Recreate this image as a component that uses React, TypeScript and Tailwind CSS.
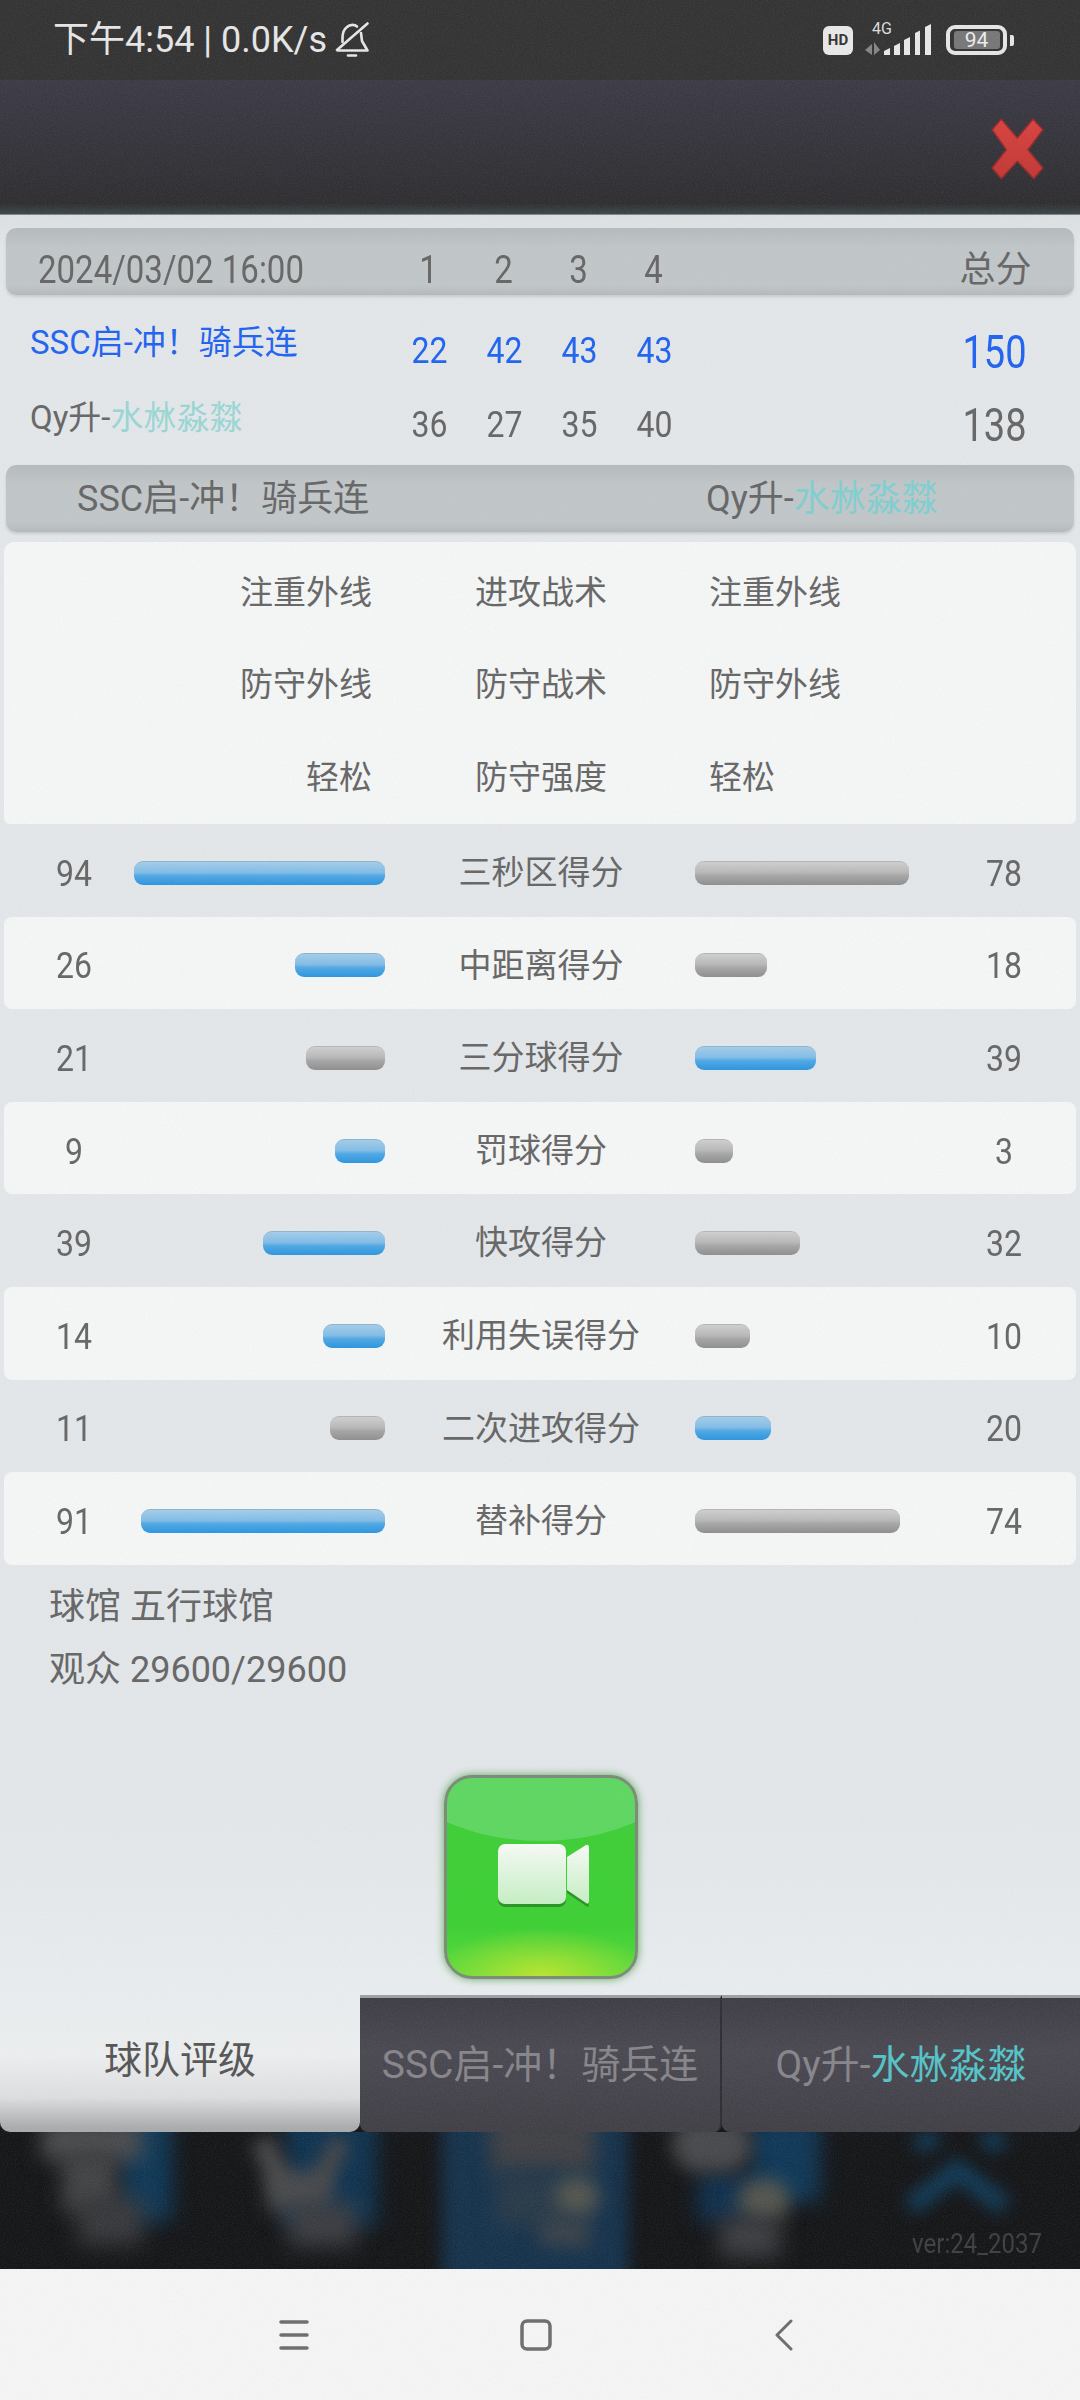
const quarters = ['1', '2', '3', '4']
const teamA = ['22', '42', '43', '43']
const teamB = ['36', '27', '35', '40']

const tactics = [
  ['注重外线', '进攻战术', '注重外线'],
  ['防守外线', '防守战术', '防守外线'],
  ['轻松', '防守强度', '轻松'],
]

const stats = [
  { a: 94, b: 78, label: '三秒区得分', wa: 251, wb: 214, win: 'a' },
  { a: 26, b: 18, label: '中距离得分', wa: 90, wb: 72, win: 'a' },
  { a: 21, b: 39, label: '三分球得分', wa: 79, wb: 121, win: 'b' },
  { a: 9, b: 3, label: '罚球得分', wa: 50, wb: 38, win: 'a' },
  { a: 39, b: 32, label: '快攻得分', wa: 122, wb: 105, win: 'a' },
  { a: 14, b: 10, label: '利用失误得分', wa: 62, wb: 55, win: 'a' },
  { a: 11, b: 20, label: '二次进攻得分', wa: 55, wb: 76, win: 'b' },
  { a: 91, b: 74, label: '替补得分', wa: 244, wb: 205, win: 'a' },
]

function Bar({ width, blue }: { width: number; blue: boolean }) {
  return (
    <div
      className={
        blue
          ? 'h-[24px] rounded-[9px] border-t border-[#8db4cc] bg-[linear-gradient(#a3cde9,#82bde8_45%,#4fa8e4_60%,#2b95df)]'
          : 'h-[24px] rounded-[9px] border-t border-[#b5b5b5] bg-[linear-gradient(#cfcfcf,#b8b8b8_45%,#a6a6a6_60%,#8e8e8e)]'
      }
      style={{ width }}
    />
  )
}

function BellOff() {
  return (
    <svg width="34" height="37" viewBox="0 0 34 37" fill="none" stroke="#e6e6e6" strokeWidth="2.6" strokeLinecap="round" strokeLinejoin="round">
      <path d="M22 4.5C20 2.5 15 2 12 5C8 8 7.5 12 7.5 16L7.5 20" />
      <path d="M26 11C26.5 14 26.5 16 27 19L32.5 28.5L3 28.5" />
      <path d="M32.5 1.5L2 28" />
      <path d="M13 33.5H21" />
    </svg>
  )
}

function StatusIcons() {
  return (
    <div className="flex items-center">
      <div className="flex h-[29px] w-[30px] items-center justify-center rounded-[6px] bg-[#e8e8e8] text-[15px] leading-none font-bold text-[#333]">HD</div>
      <div className="relative ml-[12px] h-[32px] w-[67px]">
        <div className="absolute top-[-3px] left-[7px] text-[16px] leading-[16px] text-[#ddd]">4G</div>
        <svg className="absolute top-0 left-0" width="67" height="32" viewBox="0 0 67 32">
          <path d="M7 20L0 26L7 31ZM9 18V31L15 26Z" fill="#858585" />
          <path d="M19 27L25 24V31H19ZM29 22L35 19V31H29ZM39 16L45 13V31H39ZM50 9L55 6.500V31H50ZM60 3L66 0V31H60Z" fill="#e8e8e8" />
        </svg>
      </div>
      <div className="ml-[14px] flex h-[30px] w-[61px] items-center justify-center rounded-[9px] border-[4px] border-[#e6e6e6]">
        <div className="flex h-[18px] w-[46px] items-center justify-center rounded-[3px] bg-[#777] text-[21px] leading-none text-[#ececec]">94</div>
      </div>
      <div className="ml-[3px] h-[11px] w-[4px] rounded-r-[2px] bg-[#e6e6e6]" />
    </div>
  )
}

function CloseIcon() {
  return (
    <svg width="53" height="62" viewBox="-1 -1 53 62">
      <defs>
        <linearGradient id="closeFill" x1="0" y1="0" x2="0" y2="1">
          <stop offset="0" stopColor="#d9423f" />
          <stop offset="1" stopColor="#c13734" />
        </linearGradient>
      </defs>
      <polygon
        points="9.3,0 25.3,19 41,0 51,10.700 36,30.700 51,49 41.700,59.700 25.300,42.300 9.300,59.700 0,49 14.300,30.700 0,10.700"
        fill="url(#closeFill)"
        stroke="#8d2b2a"
        strokeWidth="1.500"
        strokeLinejoin="round"
      />
    </svg>
  )
}

function CameraIcon() {
  return (
    <svg className="ml-[5px]" width="92" height="66" viewBox="0 0 92 66">
      <defs>
        <linearGradient id="camFill" x1="0" y1="0" x2="0" y2="1">
          <stop offset="0" stopColor="#f7fbf6" />
          <stop offset="1" stopColor="#c6efc4" />
        </linearGradient>
      </defs>
      <g fill="#23801f" opacity="0.75" transform="translate(0 3)">
        <rect x="0" y="0" width="68" height="60" rx="7" />
        <path d="M69 15L88 1Q91 0 91 4V57Q91 61 88 59L69 46Z" />
      </g>
      <g fill="url(#camFill)">
        <rect x="0" y="0" width="68" height="60" rx="7" />
        <path d="M69 13L88 1Q91 0 91 4V57Q91 61 88 59L69 46Z" />
      </g>
    </svg>
  )
}

function BlurredIcons() {
  return (
    <>
      <div className="absolute top-[-20px] left-[120px] h-[110px] w-[52px] bg-[#0f3857] blur-[10px]" />
      <div className="absolute top-[-10px] left-[42px] h-[38px] w-[100px] bg-[#4c4d50] blur-[10px]" />
      <div className="absolute top-[20px] left-[62px] h-[60px] w-[55px] bg-[#434446] blur-[10px]" />
      <div className="absolute top-[65px] left-[78px] h-[48px] w-[65px] bg-[#38393c] blur-[11px]" />

      <div className="absolute top-[-20px] left-[285px] h-[115px] w-[92px] bg-[#0f3350] blur-[10px]" />
      <div className="absolute top-[5px] left-[262px] h-[60px] w-[24px] rotate-[-25deg] bg-[#454648] blur-[8px]" />
      <div className="absolute top-[5px] left-[318px] h-[60px] w-[20px] rotate-[25deg] bg-[#454648] blur-[8px]" />
      <div className="absolute top-[40px] left-[268px] h-[40px] w-[60px] bg-[#4a4b4d] blur-[10px]" />
      <div className="absolute top-[70px] left-[288px] h-[44px] w-[68px] bg-[#3c3d41] blur-[11px]" />

      <div className="absolute top-[-20px] left-[442px] h-[180px] w-[186px] bg-[#15324c] blur-[8px]" />
      <div className="absolute top-[-20px] left-[490px] h-[60px] w-[105px] bg-[#404145] blur-[10px]" />
      <div className="absolute top-[40px] left-[495px] h-[55px] w-[70px] bg-[#283a49] blur-[10px]" />
      <div className="absolute top-[45px] left-[555px] h-[40px] w-[44px] rounded-full bg-[#55564f] blur-[9px]" />
      <div className="absolute top-[85px] left-[540px] h-[30px] w-[50px] bg-[#39424a] blur-[9px]" />

      <div className="absolute top-[-15px] left-[750px] h-[85px] w-[70px] bg-[#0f3857] blur-[10px]" />
      <div className="absolute top-[40px] left-[698px] h-[50px] w-[55px] bg-[#10304d] blur-[10px]" />
      <div className="absolute top-[-15px] left-[672px] h-[55px] w-[80px] rounded-full bg-[#48494c] blur-[9px]" />
      <div className="absolute top-[47px] left-[738px] h-[42px] w-[52px] rounded-full bg-[#55564f] blur-[9px]" />
      <div className="absolute top-[85px] left-[720px] h-[40px] w-[60px] bg-[#3e3f43] blur-[11px]" />

      <svg className="absolute top-0 left-[895px] blur-[8px]" width="130" height="90" viewBox="0 0 130 90" fill="none" stroke="#113a56" strokeWidth="20">
        <path d="M15 75L62 38L110 75" />
        <path d="M22 15L42 0M88 0L108 15" />
      </svg>
    </>
  )
}

export default function App() {
  return (
    <div className="relative flex h-[2400px] w-[1080px] flex-col overflow-hidden bg-[#141517] font-['Roboto','Noto_Sans_CJK_SC',sans-serif] text-[33px] text-[#666]">
      {/* status bar */}
      <div className="flex h-[80px] items-center justify-between bg-[#333333] pr-[66px] pl-[53px] text-[#e6e6e6]">
        <div className="flex items-center gap-[8px]">
          <span className="text-[36px] leading-none">下午4:54 | 0.0K/s</span>
          <BellOff />
        </div>
        <StatusIcons />
      </div>

      <div className="flex h-[134px] items-start justify-end bg-[linear-gradient(#3c3a46,#2e2e31_92%,#3d4648)] pt-[38px] pr-[36px]">
        <CloseIcon />
      </div>

      {/* main panel */}
      <div className="flex h-[1781px] flex-col border-t border-[#7d8688] bg-[linear-gradient(#dde0e1,#e3e7ea_2%,#e3e7ea_90%,#e9edef)] pt-[13px]">
        <div className="mx-[6px] flex h-[67px] items-center rounded-[10px] bg-[linear-gradient(#b5babd,#c1c6c9_30%,#c1c6c9_85%,#b4b9bc)] pt-[16px] pl-[32px] shadow-[0_2px_3px_rgba(0,0,0,0.12)]">
          <div className="w-[353px] origin-left scale-y-[1.15] leading-none">2024/03/02 16:00</div>
          {quarters.map((q) => (
            <div key={q} className="w-[75px] scale-y-[1.15] text-center leading-none">{q}</div>
          ))}
          <div className="ml-[267px] w-[75px] text-center text-[36px] leading-none">总分</div>
        </div>

        <div className="flex h-[85px] items-start pt-[30px] pl-[30px] text-[#1f63f0]">
          <div className="mt-[1px] w-[362px] text-[33px] leading-none">SSC启-冲！骑兵连</div>
          {teamA.map((n, i) => (
            <div key={i} className="mt-[9px] w-[75px] scale-y-[1.15] text-center text-[32px] leading-none">{n}</div>
          ))}
          <div className="mt-[8px] ml-[265px] w-[75px] scale-y-[1.2] text-center text-[38px] leading-none">150</div>
        </div>
        <div className="flex h-[85px] items-start pt-[20px] pl-[30px]">
          <div className="mt-[1px] w-[362px] text-[33px] leading-none">
            Qy升-<span className="text-[#9ad6d4]">水沝淼㵘</span>
          </div>
          {teamB.map((n, i) => (
            <div key={i} className="mt-[8px] w-[75px] scale-y-[1.15] text-center text-[32px] leading-none">{n}</div>
          ))}
          <div className="mt-[6px] ml-[265px] w-[75px] scale-y-[1.2] text-center text-[38px] leading-none">138</div>
        </div>

        <div className="mx-[6px] flex h-[67px] items-center rounded-[10px] bg-[linear-gradient(#b5babd,#c1c6c9_30%,#c1c6c9_85%,#b4b9bc)] pl-[71px] text-[36px] shadow-[0_2px_3px_rgba(0,0,0,0.12)]">
          <div className="w-[629px]">SSC启-冲！骑兵连</div>
          <div>
            Qy升-<span className="text-[#7fcfd0]">水沝淼㵘</span>
          </div>
        </div>

        <div className="mx-[4px] mt-[10px] rounded-t-[10px] rounded-b-[6px] bg-[#f5f6f6] pt-[4px]">
          {tactics.map((row) => (
            <div key={row[1]} className="flex h-[92.700px] items-center">
              <div className="w-[368px] text-right">{row[0]}</div>
              <div className="w-[338px] text-center">{row[1]}</div>
              <div className="ml-[-1px]">{row[2]}</div>
            </div>
          ))}
        </div>

        <div>
          {stats.map((s, i) => (
            <div
              key={s.label}
              className={
                i % 2 === 0
                  ? 'mx-[4px] flex h-[92.600px] items-center pt-[5px]'
                  : 'mx-[4px] flex h-[92.600px] items-center rounded-[8px] bg-[#f5f6f6] pt-[5px]'
              }
            >
              <div className="ml-[36px] w-[68px] scale-y-[1.15] text-center text-[32px]">{s.a}</div>
              <div className="flex w-[277px] justify-end">
                <Bar width={s.wa} blue={s.win === 'a'} />
              </div>
              <div className="w-[310px] pl-[2px] text-center">{s.label}</div>
              <div className="flex w-[245px]">
                <Bar width={s.wb} blue={s.win === 'b'} />
              </div>
              <div className="w-[128px] scale-y-[1.15] text-center text-[32px]">{s.b}</div>
            </div>
          ))}
        </div>

        <div className="mt-[11px] pl-[49px] text-[36px] leading-[63px]">
          <div>球馆 五行球馆</div>
          <div>观众 29600/29600</div>
        </div>

        <div className="mt-[73px] flex justify-center pl-[2px]">
          <div className="relative flex h-[204px] w-[194px] items-center justify-center overflow-hidden rounded-[28px] border-[3px] border-[#7d8a7a] bg-[radial-gradient(ellipse_60%_24%_at_50%_100%,#b9e52d,rgba(185,229,45,0)),linear-gradient(#3fce39,#3dd033_75%,#58db3d)] shadow-[0_0_8px_#5da75a]">
            <div className="absolute top-[-137px] left-[-66px] h-[200px] w-[320px] rounded-[50%] bg-[#7de08a]/50" />
            <CameraIcon />
          </div>
        </div>
      </div>

      {/* tabs */}
      <div className="flex h-[137px]">
        <div className="flex w-[360px] items-center justify-center rounded-b-[10px] bg-[linear-gradient(#e9edef,#eceeef_45%,#dcdedf_75%,#a9abac_97%)] pb-[8px] text-[38px] leading-none text-[#555]">
          球队评级
        </div>
        <div className="flex w-[362px] items-center justify-center rounded-b-[8px] border-t-[3px] border-r-2 border-t-[#9ea0a1] border-r-[#2e2d33] bg-[linear-gradient(#3e3d45,#4a4952_40%,#403f46)] text-[39px] leading-none text-[#85858a]">
          SSC启-冲！骑兵连
        </div>
        <div className="flex w-[358px] items-center justify-center rounded-b-[8px] border-t-[3px] border-t-[#9ea0a1] bg-[linear-gradient(#3e3d45,#4a4952_40%,#403f46)] text-[39px] leading-none text-[#85858a]">
          Qy升-<span className="text-[#55c3c8]">水沝淼㵘</span>
        </div>
      </div>

      {/* dimmed launcher behind the dialog */}
      <div className="relative flex h-[137px] items-end justify-end overflow-hidden bg-[#141517] pr-[38px] pb-[13px]">
        <BlurredIcons />
        <span className="relative scale-y-[1.15] text-[24px] leading-none text-[#3f3f41]">ver:24_2037</span>
      </div>

      {/* navigation bar */}
      <div className="flex h-[131px] items-start bg-[#f5f5f5] pt-[50px] pl-[279px]">
        <svg width="30" height="32" viewBox="0 0 30 32" fill="none" stroke="#6d6d6d" strokeWidth="3.500" strokeLinecap="round">
          <path d="M2 3H28M2 16H28M2 29H28" />
        </svg>
        <svg className="ml-[211px]" width="32" height="32" viewBox="0 0 32 32" fill="none" stroke="#6d6d6d" strokeWidth="3.500">
          <rect x="2" y="2" width="28" height="28" rx="5" />
        </svg>
        <svg className="ml-[223px]" width="18" height="32" viewBox="0 0 18 32" fill="none" stroke="#6d6d6d" strokeWidth="3" strokeLinecap="round" strokeLinejoin="round">
          <path d="M16 2L2 16L16 30" />
        </svg>
      </div>

      {/* sensor grain over the whole capture */}
      <svg className="pointer-events-none absolute top-0 left-0 opacity-[0.10]" width="1080" height="2400">
        <filter id="grain">
          <feTurbulence type="fractalNoise" baseFrequency="0.9" numOctaves="2" seed="4" />
          <feColorMatrix values="0 0 0 0 0.5  0 0 0 0 0.5  0 0 0 0 0.5  1.600 0 0 0 -0.500" />
        </filter>
        <rect width="1080" height="2400" filter="url(#grain)" />
      </svg>
    </div>
  )
}
